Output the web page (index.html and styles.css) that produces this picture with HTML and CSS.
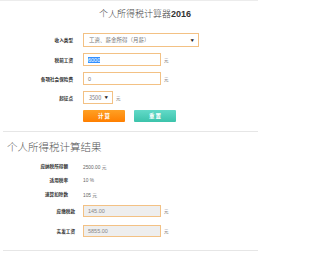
FILE: index.html
```html
<!DOCTYPE html>
<html lang="zh-CN">
<head>
<meta charset="utf-8">
<title>个人所得税计算器2016</title>
<link rel="stylesheet" href="styles.css">
</head>
<body>
<div class="page">
  <h1 class="title">个人所得税计算器<b>2016</b></h1>
  <div class="form">
    <div class="row r1">
      <span class="label">收入类型</span>
      <div class="select wide"><span>工资、薪金所得（月薪）</span><i class="arrow">▼</i></div>
    </div>
    <div class="row r2">
      <span class="label">税前工资</span>
      <div class="input"><span class="sel">6000</span></div>
      <span class="unit">元</span>
    </div>
    <div class="row r3">
      <span class="label">各项社会保险费</span>
      <div class="input"><span>0</span></div>
      <span class="unit">元</span>
    </div>
    <div class="row r4">
      <span class="label">起征点</span>
      <div class="select small"><span>3500</span><i class="arrow">▼</i></div>
      <span class="unit">元</span>
    </div>
    <div class="row r5">
      <span class="label"></span>
      <div class="btns">
        <button class="btn calc">计 算</button>
        <button class="btn reset">重 置</button>
      </div>
    </div>
  </div>
  <hr class="divider">
  <h2 class="heading">个人所得税计算结果</h2>
  <div class="results">
    <div class="rrow">
      <span class="rlabel">应纳税所得额</span>
      <span class="value">2500.00 元</span>
    </div>
    <div class="rrow">
      <span class="rlabel">适用税率</span>
      <span class="value">10 %</span>
    </div>
    <div class="rrow">
      <span class="rlabel">速算扣除数</span>
      <span class="value">105 元</span>
    </div>
    <div class="irow first">
      <span class="ilabel">应缴税款</span>
      <div class="input ro"><span>145.00</span></div>
      <span class="unit">元</span>
    </div>
    <div class="irow">
      <span class="ilabel">实发工资</span>
      <div class="input ro"><span>5855.00</span></div>
      <span class="unit">元</span>
    </div>
  </div>
  <hr class="divider bottom">
</div>
</body>
</html>
```
FILE: styles.css
```css
html, body {
  margin: 0;
  padding: 0;
  background: #fff;
}
body {
  font-family: "Noto Sans CJK SC", "Liberation Sans", sans-serif;
  color: #333;
}
.page {
  border-top: 1px solid #ececec;
  width: 258px;
  height: 252px;
  overflow: hidden;
}
.title {
  margin: 7px 0 13px 99px;
  font-size: 9px;
  line-height: 12px;
  font-weight: 300;
  color: #444;
  white-space: nowrap;
}
.title b {
  font-family: "Liberation Sans", sans-serif;
  font-weight: bold;
  color: #333;
}
.form {
  display: flex;
  flex-direction: column;
  gap: 6px;
}
.row {
  display: flex;
  align-items: center;
}
.r1 { height: 14px; }
.r2, .r3, .r4 { height: 13px; }
.r5 { height: 12px; }
.label {
  width: 73px;
  margin-right: 10px;
  text-align: right;
  font-size: 4.6px;
  font-weight: bold;
  color: #333;
  white-space: nowrap;
}
.select, .input {
  box-sizing: border-box;
  border: 1px solid #f3c184;
  background: #fff;
  display: flex;
  align-items: center;
  padding: 0 4px;
  font-size: 5.5px;
  color: #777;
  height: 100%;
}
.select.wide {
  width: 116px;
  justify-content: space-between;
  padding-left: 5px;
}
.select.small {
  width: 30px;
  justify-content: space-between;
  padding-left: 5px;
}
.arrow {
  font-style: normal;
  font-size: 3.5px;
  color: #222;
}
.input {
  width: 78px;
  font-family: "Liberation Sans", sans-serif;
}
.sel {
  background: #3390ff;
  color: #fff;
  line-height: 6px;
}
.unit {
  margin-left: 3px;
  font-size: 4.5px;
  color: #666;
}
.btns {
  display: flex;
  gap: 9px;
  height: 12px;
}
.btn {
  width: 42px;
  height: 12px;
  border: 0;
  padding: 0;
  border-radius: 1px;
  color: #fff;
  font-family: "Noto Sans CJK SC", sans-serif;
  font-size: 5.5px;
  font-weight: bold;
  cursor: pointer;
}
.calc {
  background: linear-gradient(#ffa024, #ff7f00);
}
.reset {
  background: linear-gradient(#62dac8, #3cc3ab);
}
.divider {
  border: 0;
  border-top: 1px solid #e6e6e6;
  margin: 9px 0 0 3px;
  height: 0;
}
.heading {
  margin: 8px 0 5px 7px;
  font-size: 10.5px;
  line-height: 14px;
  font-weight: 300;
  color: #555;
}
.results {
  display: flex;
  flex-direction: column;
}
.rrow {
  display: flex;
  align-items: center;
  height: 14px;
}
.rlabel {
  width: 68px;
  margin-right: 15px;
  text-align: right;
  font-size: 4.6px;
  font-weight: bold;
  color: #333;
  white-space: nowrap;
}
.value {
  font-size: 4.8px;
  color: #666;
  font-family: "Liberation Sans", "Noto Sans CJK SC", sans-serif;
}
.irow {
  display: flex;
  align-items: center;
  height: 12px;
  margin-top: 8px;
}
.irow.first {
  margin-top: 4px;
}
.ilabel {
  width: 75px;
  margin-right: 8px;
  text-align: right;
  font-size: 4.6px;
  font-weight: bold;
  color: #333;
  white-space: nowrap;
}
.input.ro {
  background: #eeeeee;
  color: #888;
}
.divider.bottom {
  margin-top: 13px;
}
```
